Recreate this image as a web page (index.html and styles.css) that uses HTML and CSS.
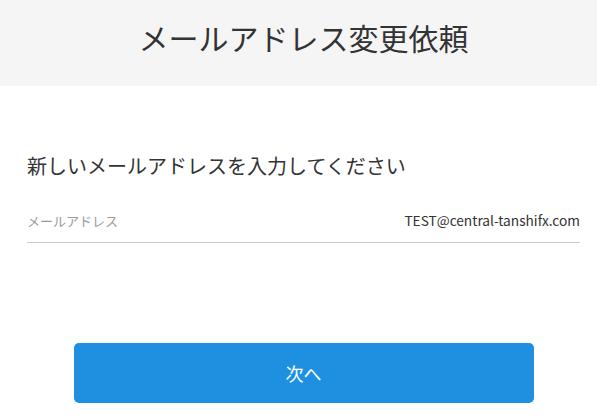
FILE: index.html
```html
<!DOCTYPE html>
<html lang="ja">

<head>
    <meta charset="UTF-8">
    <meta name="viewport" content="width=device-width, initial-scale=1.0">
    <title>メールアドレス変更依頼</title>
    <link rel="stylesheet" href="styles.css">
</head>

<body>
    <header class="page_header">
        <h1>メールアドレス変更依頼</h1>
    </header>
    <main class="content">
        <form id="formulaire_mail">
            <p class="intro">新しいメールアドレスを入力してください</p>
            <div class="field">
                <label for="mail">メールアドレス</label>
                <input type="email" id="mail" value="TEST@central-tanshifx.com">
            </div>
            <button type="button">次へ</button>
        </form>
    </main>
</body>

</html>
```

FILE: styles.css
```css
body {
    margin: 0;
    font-family: "Noto Sans CJK JP", "Noto Sans", sans-serif;
    color: #333;
    background-color: #fff;
}

.page_header {
    height: 86px;
    background-color: #f5f5f5;
    display: flex;
    align-items: center;
    justify-content: center;
    padding-left: 10px;
    box-sizing: border-box;
}

.page_header h1 {
    margin: 0 0 12px;
    font-size: 30px;
    font-weight: normal;
    line-height: 1;
    color: #333;
}

.content {
    padding: 0 17px 0 27px;
}

#formulaire_mail {
    display: flex;
    flex-direction: column;
}

.intro {
    margin: 68px 0 0;
    font-size: 20px;
    line-height: 24px;
}

.field {
    display: flex;
    align-items: center;
    justify-content: space-between;
    margin-top: 28px;
    height: 37px;
    padding-bottom: 8px;
    box-sizing: border-box;
    border-bottom: 1px solid #ccc;
}

label {
    font-size: 13px;
    color: #999;
}

input {
    flex: 1;
    border: none;
    padding: 0;
    text-align: right;
    font-family: inherit;
    font-size: 13.7px;
    color: #333;
    background: transparent;
}

input:focus {
    outline: none;
}

button {
    align-self: center;
    margin-top: 100px;
    width: 460px;
    height: 60px;
    font-family: inherit;
    font-size: 18px;
    color: #fff;
    background-color: #1f8fdf;
    border: none;
    border-radius: 5px;
    cursor: pointer;
}
```
